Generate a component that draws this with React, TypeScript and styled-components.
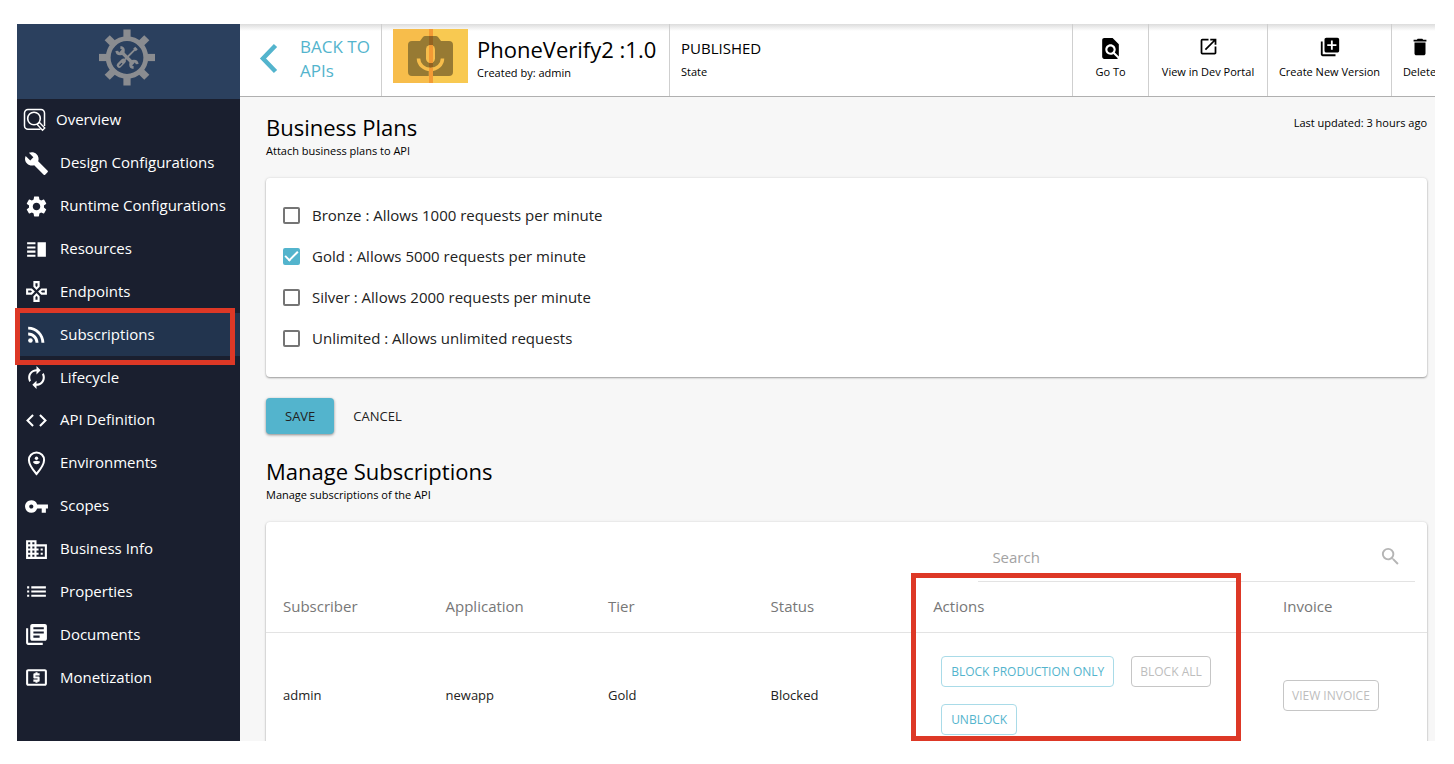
import React from "react";
import styled, { createGlobalStyle, css } from "styled-components";
import {
  MdAutorenew,
  MdBuild,
  MdBusiness,
  MdCode,
  MdDelete,
  MdFindInPage,
  MdLaunch,
  MdLibraryAdd,
  MdLibraryBooks,
  MdList,
  MdLocalAtm,
  MdOutlineGames,
  MdRssFeed,
  MdSearch,
  MdSettings,
  MdVerticalSplit,
  MdVpnKey,
} from "react-icons/md";

const color = {
  accent: "#53b4cd",
  navy: "#1a1f2f",
  brand: "#2b405e",
  active: "#22344e",
  annotation: "#dd3826",
  page: "#f7f7f7",
  line: "#e3e3e3",
};

const GlobalStyle = createGlobalStyle`
  *, *::after { box-sizing: border-box; }
  body {
    margin: 0;
    background: #fff;
    color: #000;
    font-family: "Open Sans", "Noto Sans", sans-serif;
    font-size: 14px;
  }
  button, input { font-family: inherit; }
`;

const Shell = styled.div`
  display: flex;
  height: 100vh;
  padding: 24px 19px 23px 17px;
`;

/* ---------- sidebar ---------- */

const Sidebar = styled.aside`
  display: flex;
  flex-direction: column;
  flex: 0 0 223px;
  background: ${color.navy};
`;

const Brand = styled.div`
  display: flex;
  justify-content: center;
  flex: 0 0 75px;
  padding: 5px 3px 0 0;
  background: ${color.brand};
`;

const Nav = styled.nav`
  display: flex;
  flex-direction: column;
  flex: 0 0 600px;
`;

const annotated = css`
  &::after {
    content: "";
    position: absolute;
    border: 5px solid ${color.annotation};
    pointer-events: none;
  }
`;

const NavLink = styled.a<{ $active?: boolean; $tight?: boolean }>`
  position: relative;
  display: flex;
  align-items: center;
  flex: 1;
  gap: ${(p) => (p.$tight ? 8 : 11)}px;
  padding-left: ${(p) => (p.$tight ? 6 : 7)}px;
  color: #fff;
  font-size: 15px;
  text-decoration: none;
  white-space: nowrap;

  svg {
    flex: none;
  }

  ${(p) =>
    p.$active &&
    css`
      background: ${color.active};
      ${annotated}
      &::after {
        inset: -5px 5px -9px -2px;
      }
    `}
`;

const RowText = styled.span`
  padding-bottom: 2px;
  line-height: 20px;
`;

/* ---------- top bar ---------- */

const Main = styled.main`
  display: flex;
  flex-direction: column;
  flex: 1;
  min-width: 0;
  overflow: hidden;
  background: ${color.page};
`;

const TopBar = styled.header`
  display: flex;
  flex: 0 0 73px;
  border-bottom: 1px solid #b0b0b0;
  background: linear-gradient(#dcdcdc, #fff 7px);
`;

const BackLink = styled.a`
  display: flex;
  flex: 0 0 142px;
  align-items: flex-start;
  gap: 22px;
  padding: 11px 0 0 19px;
  border-right: 1px solid #cfcfcf;
  color: ${color.accent};
  font-size: 17px;
  line-height: 24px;
  text-decoration: none;

  svg {
    flex: none;
    margin-top: 8px;
  }
`;

const ApiSummary = styled.div`
  display: flex;
  flex: 0 0 288px;
  gap: 9px;
  padding: 5px 0 0 11px;
  border-right: 1px solid #cfcfcf;
  white-space: nowrap;
`;

const ApiName = styled.h1`
  margin: 6px 0 2px;
  font-size: 22px;
  font-weight: 400;
  line-height: 28px;
`;

const ApiState = styled.div`
  flex: 1;
  min-width: 0;
  padding: 14px 0 0 11px;
  font-size: 15px;
  line-height: 20px;
`;

const Small = styled.div`
  font-size: 11px;
  line-height: 16px;
`;

const StateLabel = styled(Small)`
  margin-top: 6px;
`;

const TopAction = styled.button<{ $width: number }>`
  display: flex;
  flex: 0 0 ${(p) => p.$width}px;
  flex-direction: column;
  align-items: center;
  gap: 2px;
  min-width: 0;
  padding: 12px 0 0;
  border: 0;
  border-left: 1px solid #cfcfcf;
  background: none;
  color: #000;
  font-size: 11px;
  line-height: 16px;
  white-space: nowrap;

  &:last-child {
    margin-right: -12px;
  }
`;

const ActionIcon = styled.span`
  display: flex;
  align-items: flex-start;
  height: 26px;
`;

/* ---------- content ---------- */

const Content = styled.div`
  display: flex;
  flex-direction: column;
  padding: 16px 8px 0 26px;
`;

const SectionHead = styled.div`
  display: flex;
  justify-content: space-between;
`;

const SectionTitle = styled.h2`
  margin: 0 0 2px;
  font-size: 22px;
  font-weight: 400;
  line-height: 28px;
`;

const Updated = styled(Small)`
  padding-top: 2px;
`;

const Card = styled.section`
  margin-top: 19px;
  border-radius: 4px;
  background: #fff;
  box-shadow: 0 1px 2px rgba(0, 0, 0, 0.35), 0 0 3px rgba(0, 0, 0, 0.1);
`;

const PlanList = styled(Card)`
  padding: 17px 17px 18px;
`;

const Plan = styled.label`
  display: flex;
  align-items: center;
  gap: 12px;
  height: 41px;
  color: #222;
  font-size: 15px;
`;

const PlanBox = styled.input`
  display: grid;
  place-items: center;
  width: 17px;
  height: 17px;
  margin: 0;
  appearance: none;
  border: 2px solid #757575;
  border-radius: 2px;
  background: #fff;

  &:checked {
    border-color: ${color.accent};
    background: ${color.accent};
  }

  &:checked::after {
    content: "";
    width: 13px;
    height: 7px;
    margin-top: -4px;
    border: solid #fff;
    border-width: 0 0 2px 2px;
    transform: rotate(-45deg);
  }
`;

const FormActions = styled.div`
  display: flex;
  gap: 8px;
  margin: 21px 0 23px;
`;

const TextButton = styled.button<{ $primary?: boolean }>`
  height: 36px;
  padding: 0 11px;
  border: 0;
  border-radius: 4px;
  background: none;
  color: #222;
  font-size: 13px;

  ${(p) =>
    p.$primary &&
    css`
      padding: 0 19px;
      background: ${color.accent};
      box-shadow: 0 1px 3px rgba(0, 0, 0, 0.45);
    `}
`;

const SearchRow = styled.div`
  display: flex;
  justify-content: flex-end;
  padding: 12px 12px 0 0;
`;

const SearchField = styled.label`
  display: flex;
  align-items: center;
  width: 38%;
  height: 48px;
  padding: 0 13px 2px 14px;
  border-bottom: 1px solid ${color.line};
  color: #b5b5b5;
`;

const SearchInput = styled.input`
  flex: 1;
  min-width: 0;
  padding: 0;
  border: 0;
  outline: 0;
  background: none;
  font-size: 15px;

  &::placeholder {
    color: #a3a3a3;
    opacity: 1;
  }
`;

const Table = styled.table`
  width: 100%;
  border-collapse: collapse;
  table-layout: fixed;
`;

const Th = styled.th<{ $width?: string; $annotated?: boolean }>`
  position: relative;
  width: ${(p) => p.$width ?? "14%"};
  height: 50px;
  padding: 0 17px 2px;
  border-bottom: 1px solid ${color.line};
  color: #777;
  font-size: 15px;
  font-weight: 400;
  text-align: left;

  ${(p) =>
    p.$annotated &&
    css`
      ${annotated}
      &::after {
        top: -9px;
        right: 25px;
        left: -5px;
        height: 168px;
      }
    `}
`;

const Td = styled.td`
  padding: 0 17px 2px;
  color: #222;
  font-size: 13px;
`;

const ButtonGroup = styled.div`
  display: flex;
  flex-wrap: wrap;
  gap: 17px;
  padding: 23px 8px;
`;

const OutlineButton = styled.button`
  height: 31px;
  padding: 0 9px;
  border: 1px solid #a9dbe8;
  border-radius: 4px;
  background: none;
  color: ${color.accent};
  font-size: 12px;
  white-space: nowrap;

  &:disabled {
    padding: 0 8px;
    border-color: #c6c6c6;
    color: #bdbdbd;
  }
`;

/* ---------- drawings ---------- */

const BrandMark = () => (
  <svg width="56" height="57" viewBox="-28 -28 56 56" aria-hidden="true">
    <g fill="#8a8c90">
      {[0, 45, 90, 135, 180, 225, 270, 315].map((a) => (
        <rect key={a} x="-3.6" y="-28" width="7.2" height="9" transform={`rotate(${a})`} />
      ))}
    </g>
    <circle r="18.8" fill="none" stroke="#8a8c90" strokeWidth="4.8" />
    <g stroke="#8a8c90" fill="none">
      <path d="M-6.5-6.5 6.5 6.5" strokeWidth="3.2" />
      <path d="M-10.2-6.6a3.3 3.3 0 1 0 3.6-3.6M10.2 6.6a3.3 3.3 0 1 0-3.6 3.6" strokeWidth="2.8" />
      <path d="M8.6-8.6-2 2" strokeWidth="1.8" />
      <path d="M7.2-9.8 9.8-7.2" strokeWidth="2.8" />
      <path d="M-3.6 3.6-7.8 7.8" strokeWidth="5" strokeLinecap="round" />
      <path d="M-5 5.6-7.6 8.2" stroke={color.brand} strokeWidth="1.3" />
    </g>
  </svg>
);

const OverviewIcon = () => (
  <svg width="25" height="25" viewBox="0 0 25 25" fill="none" stroke="#fff" aria-hidden="true">
    <path d="M17.5 21.2H5A3.5 3.5 0 0 1 1.5 17.7V5A3.5 3.5 0 0 1 5 1.5H18A3.5 3.5 0 0 1 21.5 5V18" strokeWidth="1.5" />
    <circle cx="11" cy="10.5" r="6.3" strokeWidth="1.6" />
    <path d="M14.2 16.5 16.5 14.5 21.8 20 19.5 22.3Z" strokeWidth="1.3" />
  </svg>
);

const EnvironmentIcon = () => (
  <svg width="25" height="25" viewBox="0 0 25 25" fill="#fff" aria-hidden="true">
    <path
      d="M12.5 1.5C8 1.5 4.9 4.9 4.9 9c0 5.2 7.6 14 7.6 14s7.6-8.8 7.6-14c0-4.1-3.1-7.5-7.6-7.5z"
      fill="none"
      stroke="#fff"
      strokeWidth="2"
    />
    <circle cx="12.5" cy="7.3" r="1.7" />
    <path d="M9 11.3q0-1.500 3.500-1.500t3.500 1.500q-1.300 2-3.500 2t-3.500-2z" />
  </svg>
);

const BackChevron = () => (
  <svg width="19" height="31" viewBox="0 0 19 31" fill="none" aria-hidden="true">
    <path d="M16.5 2.5 4 15.5 16.5 28.5" stroke={color.accent} strokeWidth="4.5" />
  </svg>
);

const ApiThumbnail = () => (
  <svg width="75" height="54" viewBox="0 0 75 54" aria-hidden="true">
    <path fill="#f7bd4b" d="M0 0h38v54H0z" />
    <path fill="#f8c951" d="M38 0h37v54H38z" />
    <path fill="#f39a35" d="M36 0h4v54h-4z" />
    <path
      fill="#977a33"
      d="M19 12h8l3-4q1-1 2-1h11q1 0 2 1l3 4h8q4 0 4 4v27q0 4-4 4H19q-4 0-4-4V16q0-4 4-4z"
    />
    <path fill="#936322" d="M36 7h4v32h-4z" />
    <rect x="33" y="16" width="9" height="18" rx="4.5" fill="#f7bd4b" />
    <path fill="#f39a35" d="M36 16h4v18h-4z" />
    <path d="M25.500 29.500a12 11 0 0 0 24 0M37.500 40v7" fill="none" stroke="#f7bd4b" strokeWidth="3.500" />
    <path fill="#f39a35" d="M36 39h4v8h-4z" />
  </svg>
);

/* ---------- data ---------- */

const navItems = [
  { label: "Overview", icon: <OverviewIcon />, tight: true },
  { label: "Design Configurations", icon: <MdBuild size={25} /> },
  { label: "Runtime Configurations", icon: <MdSettings size={25} /> },
  { label: "Resources", icon: <MdVerticalSplit size={25} /> },
  { label: "Endpoints", icon: <MdOutlineGames size={25} /> },
  { label: "Subscriptions", icon: <MdRssFeed size={25} />, active: true },
  { label: "Lifecycle", icon: <MdAutorenew size={25} /> },
  { label: "API Definition", icon: <MdCode size={25} /> },
  { label: "Environments", icon: <EnvironmentIcon /> },
  { label: "Scopes", icon: <MdVpnKey size={25} /> },
  { label: "Business Info", icon: <MdBusiness size={25} /> },
  { label: "Properties", icon: <MdList size={25} /> },
  { label: "Documents", icon: <MdLibraryBooks size={25} /> },
  { label: "Monetization", icon: <MdLocalAtm size={25} /> },
];

const plans = [
  { id: "bronze", text: "Bronze : Allows 1000 requests per minute" },
  { id: "gold", text: "Gold : Allows 5000 requests per minute", checked: true },
  { id: "silver", text: "Silver : Allows 2000 requests per minute" },
  { id: "unlimited", text: "Unlimited : Allows unlimited requests" },
];

const topActions = [
  { label: "Go To", width: 76, icon: <MdFindInPage size={25} /> },
  { label: "View in Dev Portal", width: 119, icon: <MdLaunch size={21} /> },
  { label: "Create New Version", width: 124, icon: <MdLibraryAdd size={22} /> },
  { label: "Delete", width: 56, icon: <MdDelete size={22} /> },
];

export default function App() {
  return (
    <>
      <GlobalStyle />
      <Shell>
        <Sidebar>
          <Brand>
            <BrandMark />
          </Brand>
          <Nav aria-label="API sections">
            {navItems.map((item) => (
              <NavLink
                key={item.label}
                href="#"
                $active={item.active}
                $tight={item.tight}
                aria-current={item.active ? "page" : undefined}
              >
                {item.icon}
                <RowText>{item.label}</RowText>
              </NavLink>
            ))}
          </Nav>
        </Sidebar>

        <Main>
          <TopBar>
            <BackLink href="#">
              <BackChevron />
              <span>
                BACK TO
                <br />
                APIs
              </span>
            </BackLink>
            <ApiSummary>
              <ApiThumbnail />
              <div>
                <ApiName>PhoneVerify2 :1.0</ApiName>
                <Small>Created by: admin</Small>
              </div>
            </ApiSummary>
            <ApiState>
              PUBLISHED
              <StateLabel>State</StateLabel>
            </ApiState>
            {topActions.map((action) => (
              <TopAction key={action.label} type="button" $width={action.width}>
                <ActionIcon>{action.icon}</ActionIcon>
                {action.label}
              </TopAction>
            ))}
          </TopBar>

          <Content>
            <SectionHead>
              <div>
                <SectionTitle>Business Plans</SectionTitle>
                <Small>Attach business plans to API</Small>
              </div>
              <Updated>Last updated: 3 hours ago</Updated>
            </SectionHead>
            <PlanList>
              {plans.map((plan) => (
                <Plan key={plan.id} htmlFor={plan.id}>
                  <PlanBox id={plan.id} type="checkbox" defaultChecked={plan.checked} />
                  <RowText>{plan.text}</RowText>
                </Plan>
              ))}
            </PlanList>
            <FormActions>
              <TextButton type="button" $primary>
                SAVE
              </TextButton>
              <TextButton type="button">CANCEL</TextButton>
            </FormActions>

            <SectionTitle>Manage Subscriptions</SectionTitle>
            <Small>Manage subscriptions of the API</Small>
            <Card>
              <SearchRow>
                <SearchField>
                  <SearchInput type="text" placeholder="Search" aria-label="Search" />
                  <MdSearch size={23} />
                </SearchField>
              </SearchRow>
              <Table>
                <thead>
                  <tr>
                    <Th>Subscriber</Th>
                    <Th>Application</Th>
                    <Th>Tier</Th>
                    <Th>Status</Th>
                    <Th $width="auto" $annotated>
                      Actions
                    </Th>
                    <Th $width="161px">Invoice</Th>
                  </tr>
                </thead>
                <tbody>
                  <tr>
                    <Td>admin</Td>
                    <Td>newapp</Td>
                    <Td>Gold</Td>
                    <Td>Blocked</Td>
                    <Td>
                      <ButtonGroup>
                        <OutlineButton type="button">BLOCK PRODUCTION ONLY</OutlineButton>
                        <OutlineButton type="button" disabled>
                          BLOCK ALL
                        </OutlineButton>
                        <OutlineButton type="button">UNBLOCK</OutlineButton>
                      </ButtonGroup>
                    </Td>
                    <Td>
                      <OutlineButton type="button" disabled>
                        VIEW INVOICE
                      </OutlineButton>
                    </Td>
                  </tr>
                </tbody>
              </Table>
            </Card>
          </Content>
        </Main>
      </Shell>
    </>
  );
}
